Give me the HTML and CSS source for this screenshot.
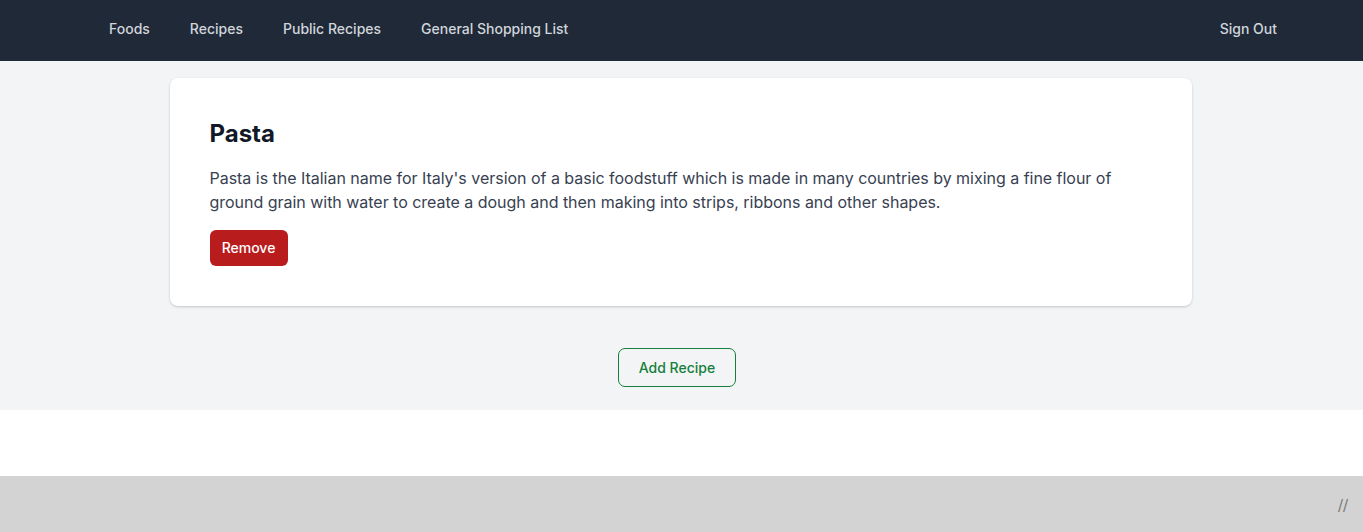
FILE: index.html
```html
<!DOCTYPE html>
<html lang="en">
<head>
<meta charset="utf-8">
<title>Recipes</title>
<link rel="stylesheet" href="styles.css">
</head>
<body>
<div class="app">
  <nav class="navbar">
    <div class="nav-links">
      <a class="nav-link" href="#">Foods</a>
      <a class="nav-link" href="#">Recipes</a>
      <a class="nav-link" href="#">Public Recipes</a>
      <a class="nav-link" href="#">General Shopping List</a>
    </div>
    <a class="nav-link" href="#">Sign Out</a>
  </nav>
  <main class="main">
    <div class="container">
      <section class="card">
        <h2 class="card-title">Pasta</h2>
        <p class="card-text">Pasta is the Italian name for Italy's version of a basic foodstuff which is made in many countries by mixing a fine flour of ground grain with water to create a dough and then making into strips, ribbons and other shapes.</p>
        <button class="btn btn-remove">Remove</button>
      </section>
      <div class="actions">
        <button class="btn btn-add">Add Recipe</button>
      </div>
    </div>
  </main>
  <div class="spacer"></div>
  <footer class="footer"><span class="footer-mark">//</span></footer>
</div>
</body>
</html>
```
FILE: styles.css
```css
* { box-sizing: border-box; }
html, body { margin: 0; padding: 0; }
body {
  font-family: Inter, "Noto Sans", sans-serif;
  background: #ffffff;
  color: #111827;
}
.navbar {
  height: 61px;
  background: #1f2937;
  display: flex;
  align-items: center;
  justify-content: space-between;
  padding: 0 86px 0 109px;
}
.nav-links {
  display: flex;
  gap: 40px;
}
.nav-link {
  color: #d1d5db;
  text-decoration: none;
  font-size: 14px;
  font-weight: 500;
  line-height: 20px;
  padding-bottom: 3px;
}
.main {
  background: #f3f4f6;
  padding: 17px 0 23px;
}
.container {
  max-width: 1024px;
  margin: 0 auto;
}
.card {
  background: #ffffff;
  border-radius: 8px;
  box-shadow: 0 1px 3px rgba(0,0,0,0.12), 0 1px 2px rgba(0,0,0,0.08);
  padding: 40px;
  margin-right: 2px;
}
.card-title {
  margin: 0 0 16px;
  font-size: 24px;
  line-height: 32px;
  font-weight: 700;
  color: #111827;
}
.card-text {
  margin: 0 0 16px;
  font-size: 16px;
  line-height: 24px;
  color: #374151;
  letter-spacing: -0.0015em;
}
.btn {
  font-family: inherit;
  font-size: 14px;
  line-height: 20px;
  cursor: pointer;
}
.btn-remove {
  display: block;
  background: #b91c1c;
  color: #ffffff;
  border: none;
  border-radius: 6px;
  height: 36px;
  width: 78px;
  padding: 0;
  font-weight: 500;
}
.actions {
  display: flex;
  justify-content: center;
  margin-top: 42px;
  padding-right: 9px;
}
.btn-add {
  background: transparent;
  color: #15803d;
  border: 1px solid #15803d;
  border-radius: 7px;
  height: 39px;
  width: 118px;
  font-weight: 500;
}
.spacer {
  height: 66px;
  background: #ffffff;
}
.footer {
  height: 56px;
  background: #d3d3d3;
  display: flex;
  align-items: center;
  justify-content: flex-end;
  padding: 4px 15px 0 0;
}
.footer-mark {
  font-family: "DejaVu Sans", sans-serif;
  font-size: 15px;
  color: #7a7a7a;
}
```
